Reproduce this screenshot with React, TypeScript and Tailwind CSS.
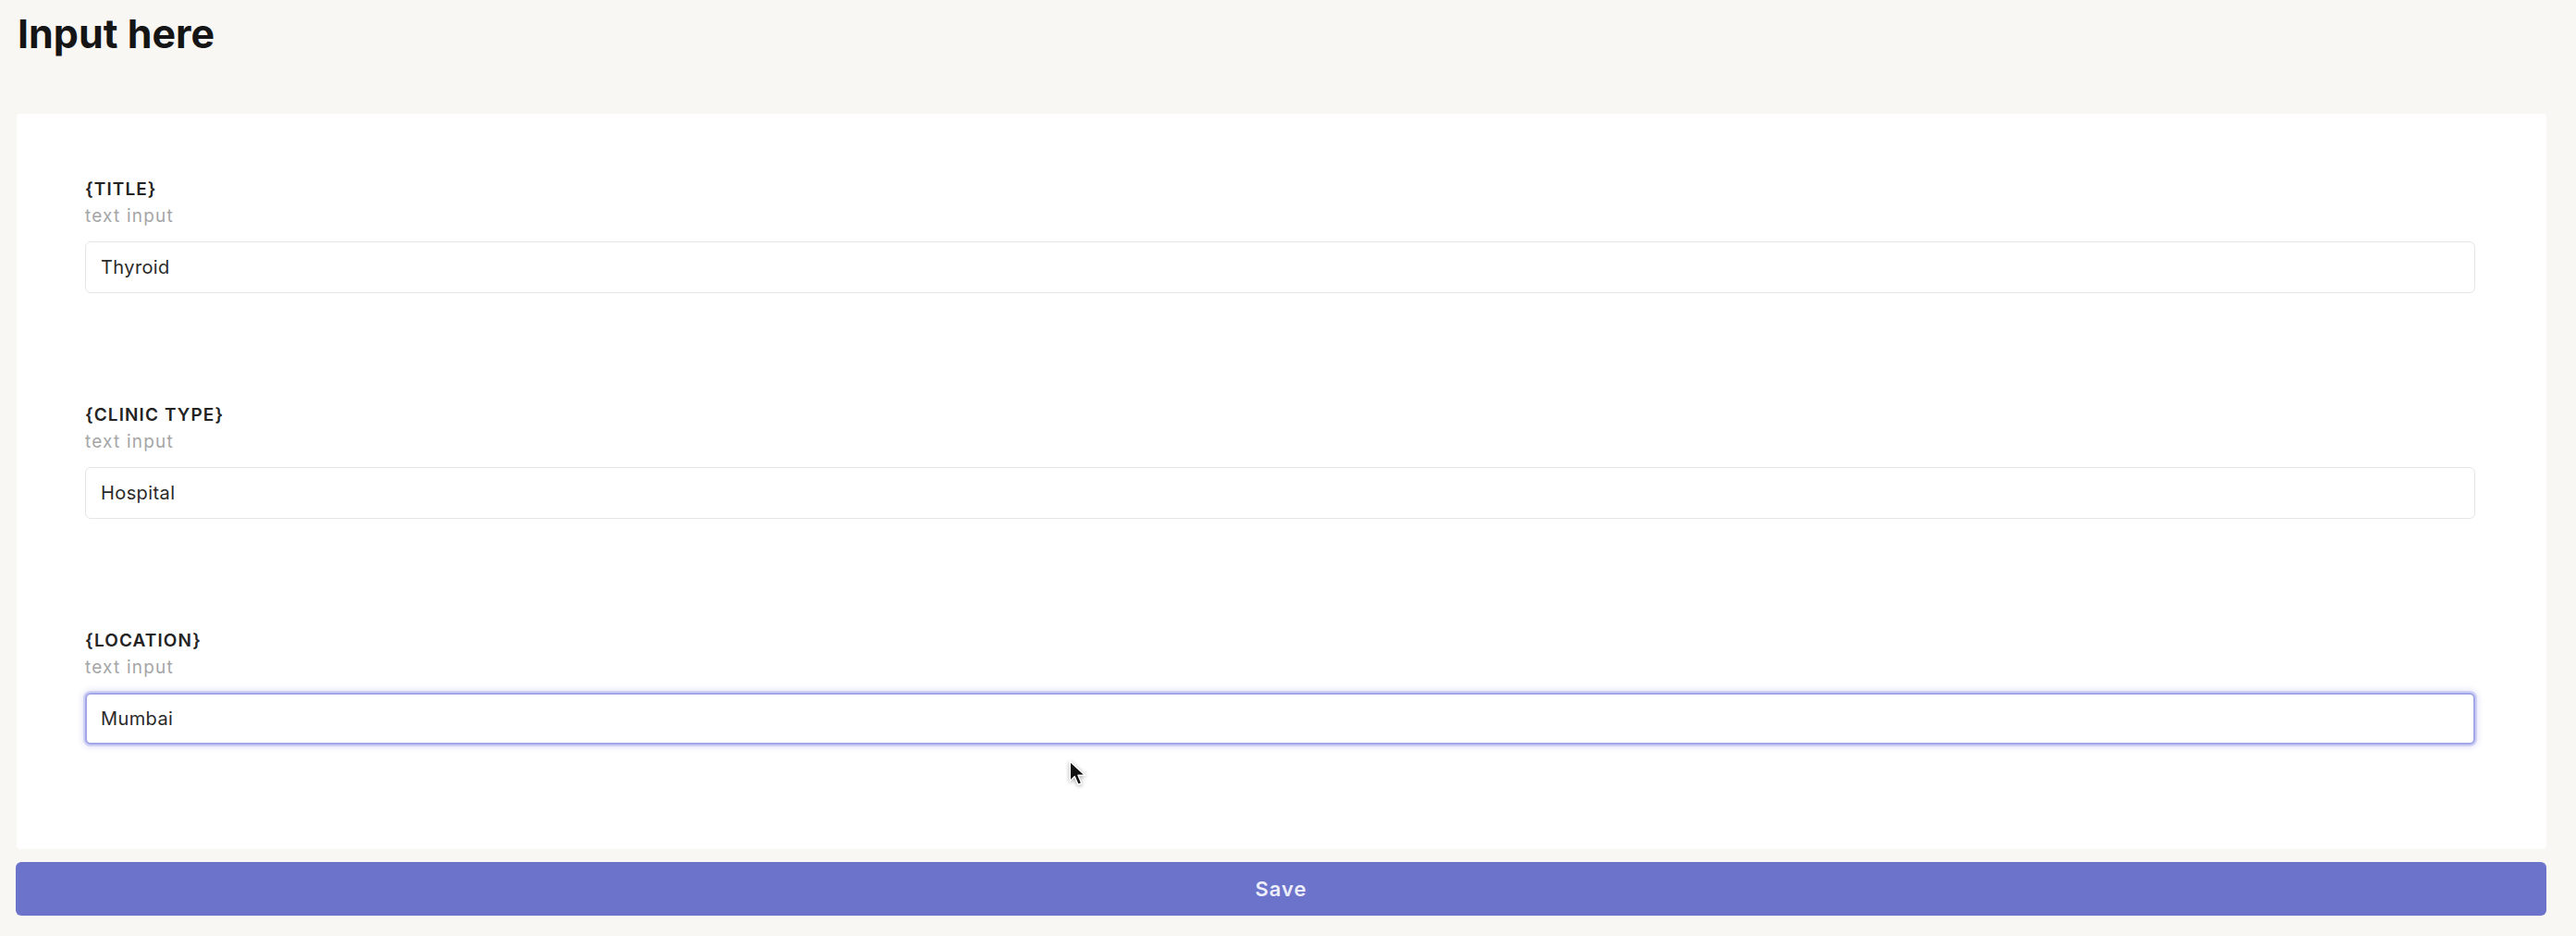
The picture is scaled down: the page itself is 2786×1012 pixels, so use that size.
import React from "react";

type Field = { key: string; label: string; value: string; focused?: boolean };

const fields: Field[] = [
  { key: "title", label: "{TITLE}", value: "Thyroid" },
  { key: "clinic", label: "{CLINIC TYPE}", value: "Hospital" },
  { key: "location", label: "{LOCATION}", value: "Mumbai", focused: true },
];

function Cursor() {
  return (
    <svg
      className="pointer-events-none absolute left-[1156px] top-[822px] drop-shadow-[0_1px_2px_rgba(0,0,0,0.35)]"
      width="20"
      height="30"
      viewBox="0 0 16 24"
    >
      <path
        d="M1 1 L1 18 L5 14 L8 21 L11 20 L8 13 L14 13 Z"
        fill="#111"
        stroke="#fff"
        strokeWidth="1.1"
        strokeLinejoin="round"
      />
    </svg>
  );
}

export default function App() {
  return (
    <div
      className="relative min-h-[1012px] bg-[#f8f7f4] pl-[17px] pr-[32px] pt-[10px]"
      style={{ fontFamily: "Inter, 'Noto Sans', sans-serif" }}
    >
      <h1 className="pl-[2px] text-[43px] font-bold leading-[52px] tracking-[0px] text-[#151515]">
        Input here
      </h1>

      <div className="ml-[1px] mt-[61px] rounded-[4px] bg-white pb-[113px] pl-[74px] pr-[77px] pt-[67px]">
        <div className="flex flex-col gap-[117px]">
          {fields.map((f) => (
            <div key={f.key} className="flex flex-col">
              <div className="text-[19px] font-semibold leading-[29px] tracking-[1.1px] text-[#232323]">
                {f.label}
              </div>
              <div className="text-[19px] leading-[29px] tracking-[1.2px] text-[#a6a6a6]">
                text input
              </div>
              <input
                readOnly
                value={f.value}
                className={
                  f.focused
                    ? "mt-[13px] h-[56px] w-full rounded-[6px] border-2 border-[#a2a5e6] bg-white pl-[15px] text-[20px] tracking-[0.4px] text-[#2a2a2a] shadow-[0_0_0_2px_rgba(196,198,242,0.75),0_0_6px_3px_rgba(190,192,240,0.45)] outline-none"
                    : "mt-[13px] h-[56px] w-full rounded-[6px] border border-[#e6e6e6] bg-white pl-[16px] text-[20px] tracking-[0.4px] text-[#2a2a2a] outline-none"
                }
              />
            </div>
          ))}
        </div>
      </div>

      <button className="mt-[14px] flex h-[58px] w-full items-center justify-center rounded-[6px] bg-[#6c73cb] text-[22px] font-semibold tracking-[1px] text-[#eceefb]">
        Save
      </button>

      <Cursor />
    </div>
  );
}
